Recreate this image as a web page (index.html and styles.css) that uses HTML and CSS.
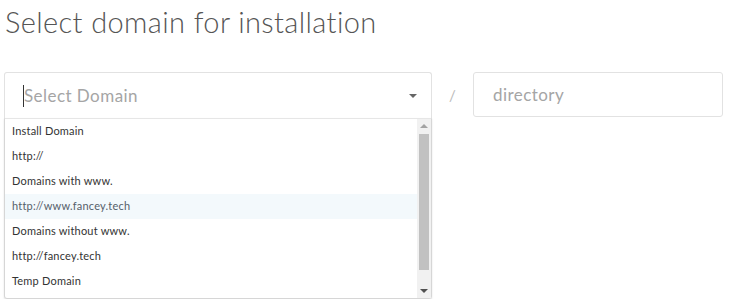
FILE: index.html
```html
<!DOCTYPE html>
<html>
    <head>
        <meta charset="utf-8">
        <title>Select domain</title>
        <link rel="stylesheet" href="styles.css">
    </head>
    <body>
        <!-- title -->
        <h1 class="title">Select domain for installation</h1>

        <div class="domain-row">
            <!-- domain select with open list -->
            <div class="select">
                <div class="select-head">
                    <span class="caret"></span>
                    <span class="placeholder">Select Domain</span>
                    <span class="arrow"></span>
                </div>
                <div class="select-list">
                    <ul class="options">
                        <li class="group">Install Domain</li>
                        <li>http://</li>
                        <li class="group">Domains with www.</li>
                        <li class="active">http://www.fancey.tech</li>
                        <li class="group">Domains without www.</li>
                        <li>http://fancey.tech</li>
                        <li class="group">Temp Domain</li>
                    </ul>
                    <div class="scrollbar">
                        <span class="sb-up"></span>
                        <span class="sb-thumb"></span>
                        <span class="sb-down"></span>
                    </div>
                </div>
            </div>

            <span class="slash">/</span>

            <!-- directory -->
            <div class="directory">directory</div>
        </div>
    </body>
</html>
```

FILE: styles.css
```css
*{
    margin: 0px;
    padding: 0px;
    box-sizing: border-box;
}
body{
    font-family: "Lato", "Liberation Sans", sans-serif;
    background: #fff;
    color: #333;
    padding: 0 6px 0 4px;
}

/* title */
.title{
    font-weight: 300;
    font-size: 29px;
    color: #555;
    line-height: 34px;
    padding: 5px 0 0 1px;
    letter-spacing: 0.38px;
}

.domain-row{
    display: flex;
    align-items: flex-start;
    margin-top: 33px;
}

/* select */
.select{
    width: 428px;
}
.select-head{
    height: 46px;
    border: 1px solid #e2e2e2;
    border-bottom: none;
    border-radius: 3px 3px 0 0;
    display: flex;
    align-items: center;
    padding: 0 14px 0 18px;
}
.caret{
    width: 1px;
    height: 22px;
    background: #333;
}
.placeholder{
    flex: 1;
    font-size: 17px;
    letter-spacing: 0.45px;
    color: #a5a5a5;
}
.arrow{
    width: 0;
    height: 0;
    border-left: 4px solid transparent;
    border-right: 4px solid transparent;
    border-top: 4px solid #666;
}
.select-list{
    display: flex;
    height: 181px;
    border: 1px solid #d6d6d6;
    border-top: 1px solid #e6e6e6;
    border-radius: 0 0 3px 3px;
    box-shadow: 0 1px 2px rgba(0,0,0,0.12);
}
.options{
    list-style: none;
    flex: 1;
}
.options li{
    height: 25px;
    line-height: 24px;
    font-size: 11px;
    letter-spacing: 0.2px;
    color: #333;
    padding-left: 7px;
}
.options li.active{
    background: #f3f9fc;
    color: #55606a;
}

/* scrollbar */
.scrollbar{
    width: 14px;
    background: #f1f1f1;
    display: flex;
    flex-direction: column;
    align-items: center;
}
.sb-up, .sb-down{
    width: 0;
    height: 0;
    border-left: 4px solid transparent;
    border-right: 4px solid transparent;
}
.sb-up{
    border-bottom: 4px solid #a3a3a3;
    margin: 5px 0 6px;
}
.sb-thumb{
    width: 10px;
    height: 136px;
    background: #c1c1c1;
}
.sb-down{
    border-top: 4px solid #505050;
    margin-top: auto;
    margin-bottom: 5px;
}

.slash{
    width: 41px;
    text-align: center;
    line-height: 46px;
    font-size: 15px;
    color: #bbb;
}

/* directory */
.directory{
    width: 250px;
    height: 45px;
    border: 1px solid #e2e2e2;
    border-radius: 3px;
    font-size: 17px;
    letter-spacing: 0.45px;
    color: #a5a5a5;
    line-height: 43px;
    padding-left: 19px;
}
```
